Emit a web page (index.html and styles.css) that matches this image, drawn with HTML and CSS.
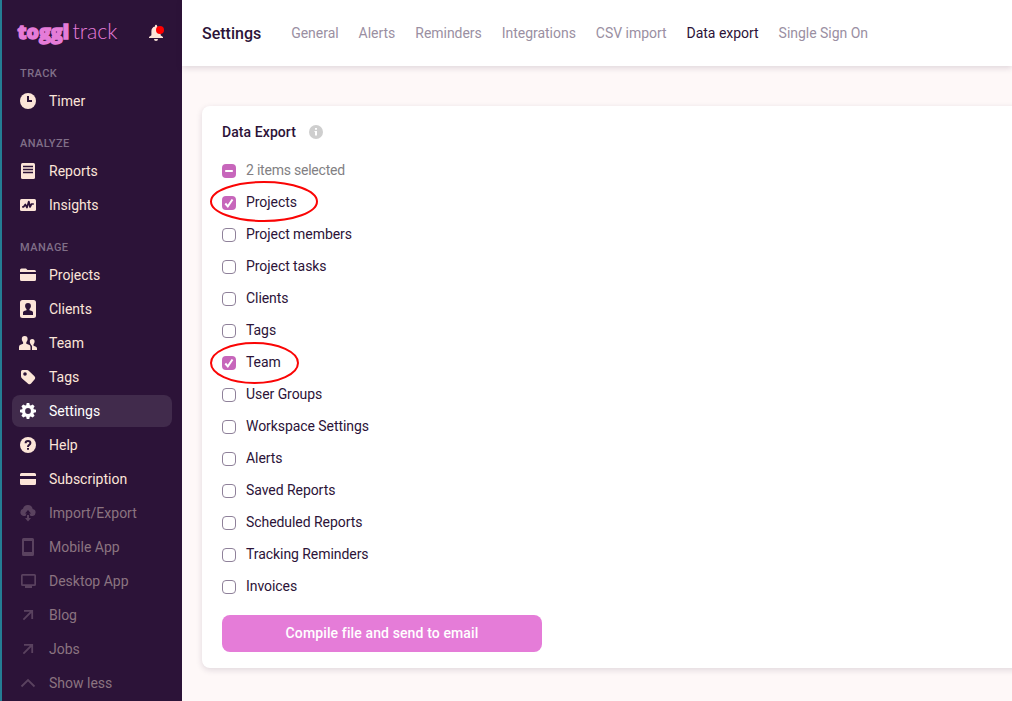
FILE: index.html
```html
<!DOCTYPE html>
<html lang="en">
<head>
<meta charset="utf-8">
<title>Toggl Track – Data export</title>
<link rel="stylesheet" href="styles.css">
</head>
<body>
<div class="app">
  <aside class="sidebar">
    <div class="brand">
      <svg class="logo" width="104" height="30" viewBox="0 0 104 30">
        <text class="logo-bold" x="2.500" y="20.500" textLength="51.500" lengthAdjust="spacingAndGlyphs">toggl</text>
        <text class="logo-light" x="57.500" y="21" textLength="45" lengthAdjust="spacingAndGlyphs">track</text>
      </svg>
      <svg class="bell" width="18" height="18" viewBox="0 0 18 18">
        <path fill="#fce5d8" d="M7 2.600V1.800a1 1 0 0 1 2 0v.8c2.400.5 3.600 2.300 3.600 4.700v3.900L15 13v1H1v-1l2.400-1.800V7.300C3.400 4.900 4.600 3.100 7 2.600zM6 15h4a2 2 0 0 1-4 0z"/>
        <circle cx="12" cy="6" r="4" fill="#f00"/>
      </svg>
    </div>
    <h2 class="section first">TRACK</h2>
    <a class="item"><svg class="icon" viewBox="0 0 18 18"><circle cx="9" cy="9" r="8"/><path class="cut-line" d="M9 4v5h4"/></svg>Timer</a>
    <h2 class="section">ANALYZE</h2>
    <a class="item"><svg class="icon" viewBox="0 0 18 18"><rect x="2" y="1" width="14" height="16" rx="1.5"/><path class="cut-line thin" d="M4 4.500h10M4 7.500h10M4 10.500h10"/></svg>Reports</a>
    <a class="item"><svg class="icon" viewBox="0 0 18 18"><rect x="1" y="3" width="16" height="12" rx="1.500"/><path class="cut-line wave" d="M3.200 10.800h1.500L6.300 8.500 8 11.500 9.800 5.500l1.200 5.500 1.500-3h2.300"/></svg>Insights</a>
    <h2 class="section">MANAGE</h2>
    <a class="item"><svg class="icon" viewBox="0 0 18 18"><path d="M1 6V4q0-1.500 1.500-1.500H7L8.500 4h7Q17 4 17 6zM1 8h16v5.500q0 1.500-1.500 1.500h-13Q1 15 1 13.500z"/></svg>Projects</a>
    <a class="item"><svg class="icon" viewBox="0 0 18 18"><rect x="1" y="0" width="16" height="18" rx="2.500"/><path class="cut" d="M9 3a2.900 2.900 0 0 1 2.900 3c0 1.500-.7 2.200-1.400 3v1.200l2.500.8q1 .5 1 1.500V15H4v-2.500q0-1 1-1.500l2.500-.8V9C6.800 8.200 6.100 7.500 6.100 6A2.900 2.900 0 0 1 9 3z"/></svg>Clients</a>
    <a class="item"><svg class="icon" viewBox="0 0 18 18"><path d="M5.700 2a2.900 2.900 0 0 1 2.900 3c0 1.500-.6 2.400-1.300 3.200v1.600l2.700 1q1.500.6 1.500 2.200v3H0v-3q0-1.600 1.500-2.200l2.600-1V8.200C3.400 7.400 2.800 6.500 2.800 5a2.900 2.900 0 0 1 2.900-3zM13.200 5a2.400 2.400 0 0 1 2.400 2.500c0 1.300-.5 2-1.100 2.700v1.600l2 .7q1.500.5 1.500 2V16h-5v-3.500q0-1.200-1.200-1.700v-.6c-.6-.7-1-1.400-1-2.700A2.400 2.400 0 0 1 13.200 5z"/></svg>Team</a>
    <a class="item"><svg class="icon" viewBox="0 0 18 18"><path d="M2 3.500Q2 2 3.500 2H8q1 0 1.700.7l5.800 5.500q1.300 1.300.4 2.900l-3.800 4.400q-1.300 1.300-3 .2l-6-5.200Q2 9.500 2 8z"/><circle class="cut" cx="6" cy="6" r="1.800"/></svg>Tags</a>
    <a class="item active"><svg class="icon" viewBox="0 0 18 18"><path d="M7.700 1h2.600l.5 2.200 1 .4 1.900-1.200 1.900 1.900-1.200 1.900.4 1 2.200.5v2.600l-2.200.5-.4 1 1.200 1.900-1.900 1.900-1.900-1.200-1 .4-.5 2.200H7.700l-.5-2.200-1-.4-1.900 1.200-1.900-1.900 1.200-1.900-.4-1L1 10.300V7.700l2.200-.5.4-1-1.200-1.900 1.900-1.900 1.900 1.200 1-.4z"/><circle cx="9" cy="9" r="2.900" fill="#412b4c"/></svg>Settings</a>
    <a class="item"><svg class="icon" viewBox="0 0 18 18"><circle cx="9" cy="9" r="8"/><path class="cut-line" d="M6.600 7.200Q6.600 5 9 5t2.400 2q0 1.200-1.200 1.900T9 10.900M9 12v1.800"/></svg>Help</a>
    <a class="item"><svg class="icon" viewBox="0 0 18 18"><path d="M1 6V4.500Q1 3 2.500 3h13Q17 3 17 4.500V6zM1 9h16v4.500q0 1.500-1.500 1.500h-13Q1 15 1 13.500z"/></svg>Subscription</a>
    <a class="item dim"><svg class="icon" viewBox="0 0 18 18"><path d="M4.500 12A3.700 3.700 0 0 1 4 4.800 5 5 0 0 1 13.700 5 3.600 3.600 0 0 1 14 12h-2.500L9 6.500 6.500 12z"/><path class="cut" d="M9 6l3 3.500h-2V12H8V9.500H6z"/><path d="M8 11h2v3h2l-3 3.500L6 14h2z"/></svg>Import/Export</a>
    <a class="item dim"><svg class="icon" viewBox="0 0 18 18"><path fill-rule="evenodd" d="M4.500 0h9Q15 0 15 1.500v15q0 1.500-1.500 1.500h-9Q3 18 3 16.500v-15Q3 0 4.500 0zM5 3v11h8V3z"/></svg>Mobile App</a>
    <a class="item dim"><svg class="icon" viewBox="0 0 18 18"><path fill-rule="evenodd" d="M3.500 2h12Q17 2 17 3.500v9q0 1.500-1.500 1.500H13v2H6v-2H3.500Q2 14 2 12.500v-9Q2 2 3.500 2zM3.700 3.700v8.600h11.600V3.700z"/></svg>Desktop App</a>
    <a class="item dim"><svg class="icon" viewBox="0 0 18 18"><path class="line" d="M5 4.800h8.200V13M13 5l-8.600 8.600"/></svg>Blog</a>
    <a class="item dim"><svg class="icon" viewBox="0 0 18 18"><path class="line" d="M5 4.800h8.200V13M13 5l-8.600 8.600"/></svg>Jobs</a>
    <a class="item dim"><svg class="icon" viewBox="0 0 18 18"><path class="line" d="M2.500 12.500L9 6l6.500 6.500"/></svg>Show less</a>
  </aside>
  <main class="main">
    <header class="topbar">
      <h1 class="title">Settings</h1>
      <nav class="tabs">
        <a>General</a><a>Alerts</a><a>Reminders</a><a>Integrations</a><a>CSV import</a><a class="current">Data export</a><a>Single Sign On</a>
      </nav>
    </header>
    <section class="card">
      <h3 class="card-title">Data Export
        <svg width="14" height="14" viewBox="0 0 14 14"><circle cx="7" cy="7" r="7" fill="#cecece"/><path fill="#fff" d="M6 3h2v1.700H6zM5.500 6H8v4.500H6V7h-.5z"/></svg>
      </h3>
      <div class="row summary"><span class="box on"><svg viewBox="0 0 14 14"><path d="M3.200 7h7.600"/></svg></span>2 items selected</div>
      <div class="row"><span class="box on"><svg viewBox="0 0 14 14"><path d="M3.300 7.500l2.500 2.800 4.700-6.800"/></svg></span>Projects<svg class="mark" width="110" height="42" viewBox="0 0 110 42"><ellipse cx="55" cy="20.500" rx="53" ry="19.500"/></svg></div>
      <div class="row"><span class="box"></span>Project members</div>
      <div class="row"><span class="box"></span>Project tasks</div>
      <div class="row"><span class="box"></span>Clients</div>
      <div class="row"><span class="box"></span>Tags</div>
      <div class="row"><span class="box on"><svg viewBox="0 0 14 14"><path d="M3.300 7.500l2.500 2.800 4.700-6.800"/></svg></span>Team<svg class="mark" width="110" height="44" viewBox="0 0 110 44"><ellipse cx="45.500" cy="22" rx="43.500" ry="20"/></svg></div>
      <div class="row"><span class="box"></span>User Groups</div>
      <div class="row"><span class="box"></span>Workspace Settings</div>
      <div class="row"><span class="box"></span>Alerts</div>
      <div class="row"><span class="box"></span>Saved Reports</div>
      <div class="row"><span class="box"></span>Scheduled Reports</div>
      <div class="row"><span class="box"></span>Tracking Reminders</div>
      <div class="row"><span class="box"></span>Invoices</div>
      <button class="submit">Compile file and send to email</button>
    </section>
  </main>
</div>
</body>
</html>
```
FILE: styles.css
```css
* { box-sizing: border-box; }
body { margin: 0; font: 14px/20px Roboto, sans-serif; color: #2c1338; overflow: hidden; }
h1, h2, h3 { margin: 0; }
.app { display: flex; height: 701px; overflow: hidden; background: #fef8f8; }

.sidebar { width: 182px; flex: none; border-left: 2px solid #247e94; background: #2c1338; padding: 0 10px; }
.brand { display: flex; justify-content: space-between; height: 62px; padding: 18px 6px 0 3px; }
.logo { overflow: visible; fill: #e57cd8; }
.logo-bold { font: 800 19px "Open Sans", sans-serif; stroke: #e57cd8; stroke-width: 1.4; }
.logo-light { font: 300 21px Lato, sans-serif; }
.bell { margin-top: 6px; }
.section { height: 38px; padding: 17px 0 0 8px; font-size: 11px; line-height: 20px; font-weight: 500; letter-spacing: .45px; color: #806f88; }
.section.first { height: 23px; padding-top: 2px; }
.item { display: flex; align-items: center; gap: 12px; height: 32px; padding-left: 7px; border-radius: 8px; color: #fce5d8; }
.item + .item { margin-top: 2px; }
.item.active { background: #412b4c; color: #fff; }
.item.dim { color: #8b7480; }
.icon { width: 18px; height: 18px; flex: none; fill: currentColor; }
.item.dim .icon { color: #5a425f; }
.icon .cut { fill: #2c1338; }
.icon .cut-line { fill: none; stroke: #2c1338; stroke-width: 2; }
.icon .thin { stroke-width: 1.4; }
.icon .wave { stroke-width: 1.7; stroke-linejoin: round; }
.icon .line { fill: none; stroke: currentColor; stroke-width: 1.8; }

.main { flex: 1; min-width: 0; }
.topbar { display: flex; align-items: center; gap: 30px; height: 66px; padding-left: 20px; background: #fff; box-shadow: 0 2px 6px rgba(44, 19, 56, .15); white-space: nowrap; }
.title { padding-top: 2px; font-size: 16px; font-weight: 500; }
.tabs { display: flex; gap: 20px; letter-spacing: -.03px; color: #9a8fa2; }
.tabs .current { color: #2c1338; }

.card { height: 562px; margin: 40px -20px 0 20px; padding: 16px 20px; border-radius: 8px; background: #fff; box-shadow: 0 2px 6px rgba(44, 19, 56, .14); }
.card-title { display: flex; align-items: center; gap: 13px; height: 20px; margin-bottom: 12px; font-size: 14px; font-weight: 500; letter-spacing: .08px; }
.row { position: relative; display: flex; align-items: center; gap: 10px; height: 32px; letter-spacing: -.06px; }
.summary { letter-spacing: -.22px; color: #827f83; }
.box { width: 14px; height: 14px; margin-top: 2px; border: 1px solid #8f819a; border-radius: 4px; }
.box.on { border: 0; background: #c766bb; }
.box svg { display: block; width: 14px; height: 14px; fill: none; stroke: #fff; stroke-width: 2; }
.mark { position: absolute; left: -13px; top: -5px; fill: none; stroke: #fa0505; stroke-width: 2; }
.submit { display: block; width: 320px; height: 37px; margin-top: 13px; padding: 0; border: 0; border-radius: 8px; background: #e57cd8; color: #fff; font: 500 14px/37px Roboto, sans-serif; letter-spacing: .12px; }
```
